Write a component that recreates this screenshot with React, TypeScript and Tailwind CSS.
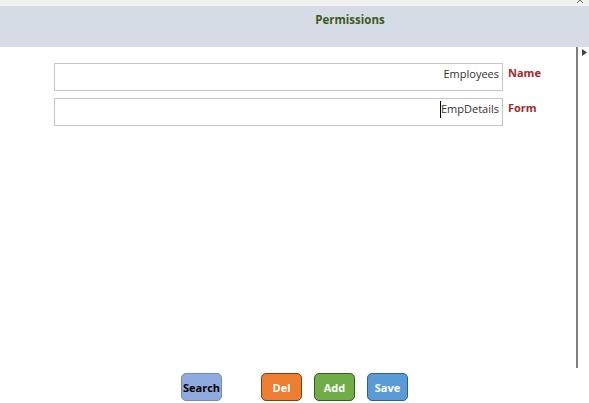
const fieldRows = [
  { value: "Employees", label: "Name", caret: false },
  { value: "EmpDetails", label: "Form", caret: true },
];

const buttons = [
  { text: "Search", cls: "ml-[181px] bg-[#8faadc] border-[#7388c4] text-black" },
  { text: "Del", cls: "ml-[39px] bg-[#ed7d31] border-[#843c0c] text-white" },
  { text: "Add", cls: "ml-[12px] bg-[#70ad47] border-[#385723] text-white" },
  { text: "Save", cls: "ml-[12px] bg-[#5b9bd5] border-[#2e5f8f] text-white" },
];

const App = () => {
  return (
    <div
      className="w-[589px] h-[403px] bg-white flex flex-col overflow-hidden"
      style={{ fontFamily: '"Open Sans", "Liberation Sans", sans-serif' }}
    >
      <div className="relative h-[6px] bg-[#f0f0f0] shrink-0">
        <svg className="absolute right-[6px] top-0" width="6" height="3" viewBox="0 0 6 3">
          <path d="M0 -3 L6 3 M6 -3 L0 3" stroke="#666" strokeWidth="1" />
        </svg>
      </div>
      <div className="h-[41px] bg-[#d6dce5] shrink-0 flex justify-center pt-[6px]">
        <div className="ml-[111px] text-[11.5px] font-bold text-[#3b5a1e] leading-[16px]">Permissions</div>
      </div>

      <div className="flex h-[321px]">
        <div className="w-[576px] flex flex-col gap-[7px] pt-[16px] pl-[54px]">
          {fieldRows.map((row) => (
            <div key={row.label} className="flex items-start gap-[5px]">
              <div className="w-[449px] h-[28px] border border-[#c6c6c6] flex items-start justify-end pr-[3px] pt-[3px]">
                <span className="text-[11px] text-[#333] leading-[14px] relative">
                  {row.caret && <span className="absolute left-[-1px] top-[-1px] w-px h-[17px] bg-black" />}
                  {row.value}
                </span>
              </div>
              <div className="pt-[2px] text-[11px] font-bold text-[#9b2d2a] leading-[16px]">{row.label}</div>
            </div>
          ))}
        </div>
        <div className="w-[2px] bg-[#7f7f7f]" />
        <div className="pl-[4px] pt-[2px]">
          <svg width="5" height="7" viewBox="0 0 5 7">
            <path d="M0 0 L5 3.5 L0 7 Z" fill="#444" />
          </svg>
        </div>
      </div>

      <div className="flex pt-[5px]">
        {buttons.map((b) => (
          <button
            key={b.text}
            className={`${b.cls} w-[41px] h-[28px] border rounded-[5px] text-[11px] font-bold leading-none flex items-center justify-center`}
          >
            {b.text}
          </button>
        ))}
      </div>
    </div>
  );
};

export default App;
